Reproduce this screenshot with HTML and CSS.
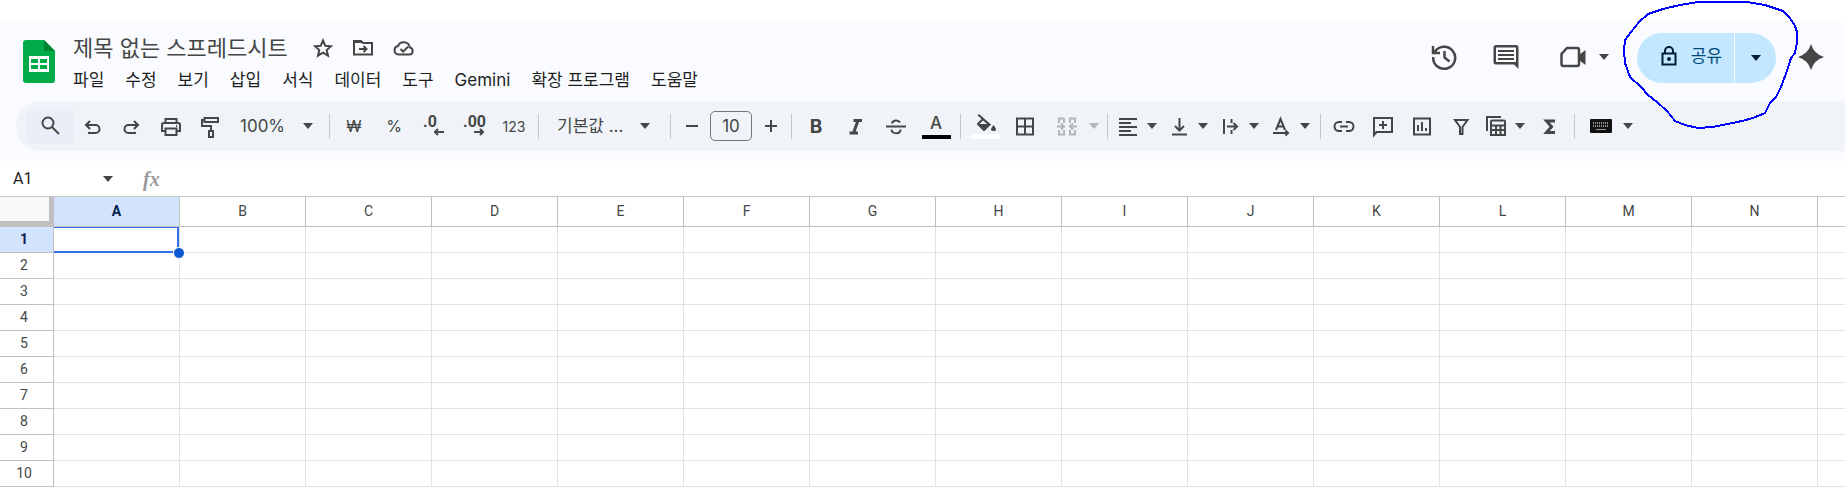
FILE: index.html
```
<!DOCTYPE html>
<html lang="ko">
	<head>
		<meta charset="utf-8">
		<title>제목 없는 스프레드시트</title>
		<link rel="stylesheet" href="styles.css">
		<script src="sheet.js" defer></script>
	</head>
	<body>

		<svg width="0" height="0" class="defs">
			<symbol id="caret" viewBox="0 0 10 6"><path d="M0 0h10L5 6z"/></symbol>
		</svg>

		<header class="top">

			<div class="header">
				<a href="#" class="logo" aria-label="스프레드시트 홈">
					<svg width="32" height="43" viewBox="0 0 32 43">
						<path fill="#00ac47" d="M3 0h18l11 11v29a3 3 0 0 1-3 3H3a3 3 0 0 1-3-3V3a3 3 0 0 1 3-3z"/>
						<path fill="#00832d" d="M21 0l11 11H21z"/>
						<path fill="#fff" fill-rule="evenodd" d="M6 16h20v16H6zM8 19v4h7v-4zM17 19v4h7v-4zM8 25v4h7v-4zM17 25v4h7v-4z"/>
					</svg>
				</a>

				<div class="heading">
					<div class="titleRow">
						<h1 class="title">제목 없는 스프레드시트</h1>
						<button class="icon" aria-label="별표">
							<svg width="20" height="20" viewBox="0 0 20 20" class="line"><path d="M10 2.500l2.300 5.300 5.700.5-4.300 3.800 1.300 5.600-5-3-5 3 1.300-5.600L2 8.300l5.700-.5z"/></svg>
						</button>
						<button class="icon" aria-label="이동">
							<svg width="20" height="20" viewBox="0 0 20 20" class="line"><path d="M1 3v13.500h18V5h-9L8 3zM1 4h8M6 11h7M10.500 8l3 3-3 3"/></svg>
						</button>
						<button class="icon" aria-label="문서 상태">
							<svg width="22" height="20" viewBox="0 0 22 20" class="line"><path d="M5.500 16.500a4.300 4.300 0 0 1-.5-8.500 6.200 6.200 0 0 1 11.800 1.500 3.600 3.600 0 0 1 .2 7zM7.500 11l2.700 2.700 4.800-4.900"/></svg>
						</button>
					</div>
					<nav class="menu">
						<a href="#">파일</a>
						<a href="#">수정</a>
						<a href="#">보기</a>
						<a href="#">삽입</a>
						<a href="#">서식</a>
						<a href="#">데이터</a>
						<a href="#">도구</a>
						<a href="#">Gemini</a>
						<a href="#">확장 프로그램</a>
						<a href="#">도움말</a>
					</nav>
				</div>

				<div class="actions">
					<button class="icon" aria-label="버전 기록">
						<svg width="26" height="26" viewBox="0 0 26 26" class="line heavy"><path d="M3.500 8.500a11 11 0 1 1-1.300 4.500M2 2v7h7M13.500 7v6.500l5 4"/></svg>
					</button>
					<button class="icon" aria-label="댓글">
						<svg width="26" height="26" viewBox="0 0 26 26"><path fill-rule="evenodd" d="M3 1h20a2.500 2.500 0 0 1 2.500 2.500V25l-4.500-4.500H3A2.500 2.500 0 0 1 .5 18V3.500A2.500 2.500 0 0 1 3 1zM3 3.500V18h20V3.500zM5 6h16v2H5zM5 10h16v2H5zM5 14h16v2H5z"/></svg>
					</button>
					<button class="icon meet" aria-label="화상 통화">
						<svg width="26" height="26" viewBox="0 0 26 26"><path class="line heavy" d="M7 4h10a2 2 0 0 1 2 2v14a2 2 0 0 1-2 2H3.500a2 2 0 0 1-2-2V10z"/><path d="M19 11l6.500-5v15L19 16z"/></svg>
						<svg width="10" height="6"><use href="#caret"/></svg>
					</button>

					<div class="share">
						<button class="shareMain">
							<svg width="16" height="20" viewBox="0 0 16 20"><path class="line" d="M1.500 7.500h13v11h-13zM4 7.500V5a4 4 0 0 1 8 0v2.500"/><circle cx="8" cy="13" r="2"/></svg>
							공유
						</button>
						<button class="shareMore" aria-label="공유 옵션">
							<svg width="10" height="6"><use href="#caret"/></svg>
						</button>
						<svg class="scribble" width="180" height="130" viewBox="0 0 180 130">
							<path d="M5 40L11 32 19 22 28 14 43 9 60 5 78 2H127L145 5 163 11 170 18 175 26 177 32V42L175 53 171 58 167 71 161 87 156 97 150 103 145 113 133 118 122 121 93 127 78 128 65 125 55 121 47 111 37 102 28 95 21 87 10 77 5 63 4 50z"/>
						</svg>
					</div>

					<button class="icon" aria-label="Gemini">
						<svg width="26" height="26" viewBox="0 0 26 26"><path d="M13 0q3 10 13 13-10 3-13 13-3-10-13-13 10-3 13-13z"/></svg>
					</button>
				</div>
			</div>

			<div class="toolbar">
				<div class="group tight">
					<button class="search" aria-label="메뉴 검색">
						<svg width="24" height="24" viewBox="0 0 24 24" class="line"><circle cx="9" cy="9" r="5.500"/><path d="M13 13l7 7"/></svg>
					</button>
					<button class="tool" aria-label="실행취소">
						<svg width="24" height="24" viewBox="0 0 24 24" class="line"><path d="M9 7l-4 4 4 4M5 11h9.500a4 4 0 0 1 0 8H7"/></svg>
					</button>
					<button class="tool" aria-label="재실행">
						<svg width="24" height="24" viewBox="0 0 24 24" class="line"><path d="M14 7l4 4-4 4M18 11H8.500a4 4 0 0 0 0 8H16"/></svg>
					</button>
					<button class="tool" aria-label="인쇄">
						<svg width="24" height="24" viewBox="0 0 24 24" class="line"><path d="M6.500 9V5h11v4M6.500 17H3v-6q0-2 2-2h14q2 0 2 2v6h-3.500M6.500 14.500h11V21h-11z"/><path d="M17 12h1"/></svg>
					</button>
					<button class="tool" aria-label="서식 복사">
						<svg width="24" height="24" viewBox="0 0 24 24" class="line"><path d="M6.500 4H20v4H6.500zM6.500 6H4v6h9v5M11 17h4v6h-4z"/></svg>
					</button>
				</div>
				<div class="pick zoom">
					<select aria-label="확대/축소"><option>100%</option><option>150%</option></select>
					<svg width="10" height="6"><use href="#caret"/></svg>
				</div>

				<div class="group">
					<button class="tool text">₩</button>
					<button class="tool text">%</button>
					<button class="tool decimal"><span>.0</span>
						<svg width="10" height="8" viewBox="0 0 10 8" class="line"><path d="M4 1L1 4l3 3M1 4h9"/></svg>
					</button>
					<button class="tool decimal"><span>.00</span>
						<svg width="10" height="8" viewBox="0 0 10 8" class="line"><path d="M6 1l3 3-3 3M9 4H0"/></svg>
					</button>
					<button class="tool text small">123</button>
				</div>

				<div class="pick font">
					<select aria-label="글꼴"><option>기본값 ...</option><option>Arial</option></select>
					<svg width="10" height="6"><use href="#caret"/></svg>
				</div>

				<div class="group size">
					<button class="step" aria-label="글꼴 크기 줄이기">
						<svg width="14" height="14" viewBox="0 0 14 14" class="line"><path d="M1 7h12"/></svg>
					</button>
					<input type="text" value="10" aria-label="글꼴 크기">
					<button class="step" aria-label="글꼴 크기 늘리기">
						<svg width="14" height="14" viewBox="0 0 14 14" class="line"><path d="M1 7h12M7 1v12"/></svg>
					</button>
				</div>

				<div class="group">
					<button class="tool text bold">B</button>
					<button class="tool" aria-label="기울임꼴">
						<svg width="24" height="24" viewBox="0 0 24 24" class="line thick"><path d="M9.500 6.500H18M5.500 19H14M14 6.500L9.500 19"/></svg>
					</button>
					<button class="tool" aria-label="취소선">
						<svg width="24" height="24" viewBox="0 0 24 24" class="line"><path d="M2 12.500h20M8 9.500a4.200 3.500 0 0 1 8-1M7.500 15.500c.5 5 9 5 9 0"/></svg>
					</button>
					<button class="tool text swatch textColor">A</button>
				</div>

				<div class="group">
					<button class="tool swatch fillColor" aria-label="채우기 색상">
						<svg width="24" height="18" viewBox="0 0 24 18"><path fill-rule="evenodd" d="M6 0l12 10.500-6 6q-1 1-2 0L4.500 11q-1-1 0-2l4-4-4-3.700zM10 6.500L6.500 10h7.500zM20.500 11q5 6 0 6t0-6z"/></svg>
					</button>
					<button class="tool" aria-label="테두리">
						<svg width="24" height="24" viewBox="0 0 24 24" class="line"><path d="M4 4.500h16v16H4zM12 4.500v16M4 12.500h16"/></svg>
					</button>
					<div class="split wide disabled">
						<button aria-label="셀 병합" disabled>
							<svg width="24" height="24" viewBox="0 0 24 24" class="line"><path d="M9 4.500H4V9M4 16v4.500h5V16M9 9V4.500M15 9V4.500h5V9M15 16v4.500h5V16M2 12.500h7M6 9.500l3 3-3 3M22 12.500h-7M18 9.500l-3 3 3 3"/></svg>
						</button>
						<button aria-label="병합 유형" disabled><svg width="10" height="6"><use href="#caret"/></svg></button>
					</div>
				</div>

				<div class="group">
					<div class="split">
						<button aria-label="가로 맞춤">
							<svg width="18" height="24" viewBox="0 0 18 24" class="line"><path d="M0 5h18M0 9h12M0 13h18M0 17h12M0 21h18"/></svg>
						</button>
						<button aria-label="가로 맞춤 선택"><svg width="10" height="6"><use href="#caret"/></svg></button>
					</div>
					<div class="split">
						<button aria-label="세로 맞춤">
							<svg width="18" height="24" viewBox="0 0 18 24" class="line"><path d="M2 20.500h15M9.500 4v12M5 12l4.500 4.500L14 12"/></svg>
						</button>
						<button aria-label="세로 맞춤 선택"><svg width="10" height="6"><use href="#caret"/></svg></button>
					</div>
					<div class="split">
						<button aria-label="텍스트 줄바꿈">
							<svg width="18" height="24" viewBox="0 0 18 24" class="line"><path d="M3 5v15M6 12.500h10M12.500 9l3.500 3.500-3.500 3.500M10.500 5v4M10.500 16v4"/></svg>
						</button>
						<button aria-label="줄바꿈 선택"><svg width="10" height="6"><use href="#caret"/></svg></button>
					</div>
					<div class="split">
						<button aria-label="텍스트 회전">
							<svg width="18" height="24" viewBox="0 0 18 24" class="line"><path d="M4 16L8.500 5 13 16M5.500 12.500h6M1 19h15M13.500 16.500L16 19l-2.500 2.500"/></svg>
						</button>
						<button aria-label="회전 선택"><svg width="10" height="6"><use href="#caret"/></svg></button>
					</div>
				</div>

				<div class="group tight">
					<button class="tool" aria-label="링크 삽입">
						<svg width="24" height="24" viewBox="0 0 24 24" class="line"><path d="M10 17H7a4.500 4.500 0 0 1 0-9h3M14 8h3a4.500 4.500 0 0 1 0 9h-3M8 12.500h8"/></svg>
					</button>
					<button class="tool" aria-label="댓글 삽입">
						<svg width="24" height="24" viewBox="0 0 24 24" class="line"><path d="M3 21V4h18v14H5.500zM12 7v8M8 11h8"/></svg>
					</button>
					<button class="tool" aria-label="차트 삽입">
						<svg width="24" height="24" viewBox="0 0 24 24" class="line"><path d="M4 4.500h16v16H4zM8 11v6M12 8v9M16 14v3"/></svg>
					</button>
					<button class="tool" aria-label="필터 만들기">
						<svg width="24" height="24" viewBox="0 0 24 24" class="line"><path d="M6 6h12.500L13.500 13v7h-2.500v-7z"/></svg>
					</button>
					<div class="split">
						<button aria-label="표 보기">
							<svg width="20" height="24" viewBox="0 0 20 24" class="line"><path d="M1 17V3h14M5 7.500q0-1 1-1h12q1 0 1 1V21H5zM5 11.500h14M5 16h14M10 12v9M14.500 12v9"/></svg>
						</button>
						<button aria-label="보기 선택"><svg width="10" height="6"><use href="#caret"/></svg></button>
					</div>
					<button class="tool" aria-label="함수">
						<svg width="24" height="24" viewBox="0 0 24 24" class="line thick"><path d="M17 7H8.500l5 5.700-5 5.800H17"/></svg>
					</button>
				</div>

				<div class="group">
					<div class="split wide">
						<button aria-label="입력 도구">
							<svg width="22" height="14" viewBox="0 0 22 14"><rect width="22" height="14" rx="1" fill="#111"/><path class="keys" d="M3 4h16M3 7h16"/><path class="space" d="M6 10.500h10"/></svg>
						</button>
						<button aria-label="입력 도구 선택"><svg width="10" height="6"><use href="#caret"/></svg></button>
					</div>
				</div>
			</div>

		</header>

		<div class="formula">
			<input class="nameBox" type="text" value="A1" aria-label="이름 상자">
			<button class="icon" aria-label="이름 범위"><svg width="10" height="6"><use href="#caret"/></svg></button>
			<label class="fx" for="fxInput">fx</label>
			<input class="fxInput" id="fxInput" type="text">
		</div>

		<main class="sheet">
			<table id="grid">
				<thead>
					<tr><th class="corner"></th></tr>
				</thead>
				<tbody></tbody>
			</table>
		</main>

	</body>
</html>
```
FILE: styles.css
```
body{
	margin: 0;
	font-family: Inter, 'Noto Sans CJK KR', sans-serif;
	font-size: 17px;
	color: #444746;
	background-color: #fff;
	overflow-x: hidden;
}

button, input, select{
	font: inherit;
	color: inherit;
	border: 0;
	margin: 0;
	padding: 0;
	background: none;
	box-sizing: border-box;
}

button{
	display: flex;
	align-items: center;
	justify-content: center;
	cursor: pointer;
}

svg{
	display: block;
	flex: none;
	fill: #444746;
}

.defs{
	position: absolute;
}

.line{
	fill: none;
	stroke: #444746;
	stroke-width: 2;
}

.heavy, .thick{
	stroke-width: 3;
}

.header .heavy{
	stroke-width: 2.5;
}

/* header */
.top{
	margin-top: 22px;
	padding-bottom: 10px;
	background-color: #f9fbff;
}

.header{
	display: flex;
	align-items: flex-start;
	height: 79px;
	padding: 0 21px 0 23px;
}

.logo{
	margin-top: 18px;
}

.heading{
	margin-left: 18px;
	padding-top: 8px;
}

.titleRow{
	display: flex;
	align-items: center;
	gap: 20px;
	height: 36px;
}

.title{
	margin: 0 5px 0 0;
	font-size: 22px;
	font-weight: 400;
	line-height: 32px;
	white-space: nowrap;
}

.menu{
	display: flex;
	gap: 21px;
	line-height: 28px;
}

.menu a{
	color: #1f1f1f;
	text-decoration: none;
	white-space: nowrap;
}

.actions{
	display: flex;
	align-items: center;
	gap: 36px;
	height: 50px;
	margin-top: 11px;
	margin-left: auto;
}

.actions .icon{
	padding-bottom: 2px;
}

.actions .meet{
	gap: 13px;
	margin-left: 5px;
}

.share{
	display: flex;
	position: relative;
	gap: 1px;
	height: 50px;
	margin: 0 -14px 0 -8px;
	color: #004a77;
}

.share button{
	background-color: #c2e7ff;
}

.share svg{
	fill: #001d35;
}

.share .line{
	fill: none;
	stroke: #001d35;
}

.shareMain{
	gap: 14px;
	width: 97px;
	padding: 0 0 4px 12px;
	border-radius: 25px 0 0 25px;
	line-height: 20px;
	white-space: nowrap;
}

.shareMore{
	width: 41px;
	border-radius: 0 25px 25px 0;
}

.share .scribble{
	position: absolute;
	top: -33px;
	left: -17px;
	fill: none;
	stroke: #0000ff;
	stroke-width: 2;
	stroke-linejoin: round;
	shape-rendering: crispEdges;
	pointer-events: none;
}

/* toolbar */
.toolbar{
	display: flex;
	align-items: center;
	height: 50px;
	margin-left: 16px;
	padding-left: 11px;
	background-color: #f0f4f9;
	border-radius: 25px 0 0 25px;
}

.group{
	display: flex;
	align-items: center;
	gap: 4px;
}

.tight{
	gap: 3px;
}

.pick + .group::before,
.group + .group::before,
.group + .font::before{
	content: "";
	width: 1px;
	height: 25px;
	background-color: #c7c7c7;
}

.pick + .group::before,
.group + .group::before{
	margin: 0 2px 0 6px;
}

.search{
	width: 47px;
	height: 35px;
	margin-right: -2px;
	background-color: #e9eef8;
	border-radius: 4px;
}

.tool{
	width: 36px;
	height: 36px;
}

.text{
	font-size: 16px;
}

.small{
	font-size: 14px;
}

.bold{
	font-size: 19px;
	font-weight: 700;
}

.decimal{
	flex-direction: column;
	align-items: flex-start;
	padding: 0 8px 0 7px;
	font-family: Roboto, sans-serif;
	font-size: 16px;
	font-weight: 700;
	line-height: 12px;
}

.decimal svg{
	align-self: flex-end;
}

.pick{
	display: flex;
	align-items: center;
	position: relative;
}

.pick select{
	width: 100%;
	height: 36px;
	appearance: none;
}

.pick svg{
	position: absolute;
	right: 14px;
	pointer-events: none;
}

.zoom{
	width: 95px;
}

.zoom select{
	padding-left: 12px;
}

.zoom svg{
	right: 10px;
}

.font{
	width: 132px;
}

.font::before{
	flex: none;
	margin-left: 6px;
}

.font select{
	padding-left: 18px;
}

.step{
	width: 29px;
	height: 30px;
}

.size input{
	width: 42px;
	height: 30px;
	border: 1px solid #747775;
	border-radius: 5px;
	text-align: center;
}

.swatch{
	flex-direction: column;
	justify-content: flex-end;
	height: 26px;
	line-height: 20px;
}

.swatch::after{
	content: "";
	width: 29px;
	height: 5px;
	margin-top: 2px;
}

.textColor{
	font-size: 17px;
	font-weight: 500;
}

.textColor::after{
	background-color: #000;
}

.fillColor::after{
	background-color: #fff;
}

.split{
	display: grid;
	grid-template-columns: 28px 19px;
	height: 36px;
}

.wide{
	grid-template-columns: 40px 14px;
}

.disabled{
	opacity: 0.35;
}

.keys{
	stroke: #999;
	stroke-width: 2;
	stroke-dasharray: 1 1;
}

.space{
	stroke: #999;
	stroke-width: 1;
}

/* formula bar */
.formula{
	display: flex;
	align-items: center;
	height: 35px;
	border-bottom: 1px solid #c7c7c7;
}

.nameBox{
	width: 103px;
	padding-left: 13px;
	font-family: Roboto, sans-serif;
	font-size: 16px;
	color: #1f1f1f;
}

.fx{
	margin-left: 30px;
	font-family: 'Liberation Serif', serif;
	font-size: 20px;
	font-style: italic;
	font-weight: 700;
	line-height: 20px;
	color: #9a9a9a;
}

.fxInput{
	flex: 1;
	margin-left: 12px;
}

/* grid */
.sheet{
	overflow: hidden;
}

table{
	width: 1944px;
	table-layout: fixed;
	border-collapse: separate;
	border-spacing: 0;
	font-family: Roboto, sans-serif;
	font-size: 14px;
	line-height: 16px;
}

th, td{
	height: 25px;
	padding: 0;
	box-sizing: content-box;
	border-right: 1px solid #e1e1e1;
	border-bottom: 1px solid #e1e1e1;
}

th{
	font-weight: 400;
	border-color: #c0c0c0;
}

thead th{
	height: 27px;
	width: 125px;
	padding-bottom: 2px;
}

tbody th{
	height: 23px;
	padding: 0 5px 2px 0;
}

thead .corner{
	width: 49px;
	height: 24px;
	padding: 0;
	background-color: #f8f9fa;
	border-right: 5px solid #c0c0c0;
	border-bottom: 6px solid #c0c0c0;
}

th.active{
	background-color: #d3e3fd;
	font-weight: 700;
	color: #041e49;
}

td.selected{
	position: relative;
}

.selected::before{
	content: "";
	position: absolute;
	top: 0;
	right: 0;
	bottom: -1px;
	left: 0;
	border: 2px solid #3271ea;
	border-top-width: 1px;
	border-left: 0;
}

.selected::after{
	content: "";
	position: absolute;
	z-index: 1;
	right: -6px;
	bottom: -7px;
	width: 10px;
	height: 10px;
	background-color: #0b57d0;
	border: 1px solid #fff;
	border-radius: 50%;
}
```
FILE: sheet.js
```
//last column runs off the window, so it carries no letter
var columns = ["A","B","C","D","E","F","G","H","I","J","K","L","M","N",""];
var rows = 10;

var headRow = document.querySelector("#grid thead tr");
var body = document.querySelector("#grid tbody");

//Column letters
for (var c = 0; c < columns.length; c++) {
	var head = document.createElement("th");
	head.scope = "col";
	head.textContent = columns[c];
	if (c == 0) {
		head.className = "active";
	}
	headRow.appendChild(head);
}

//Numbered rows
for (var r = 1; r <= rows; r++) {
	var row = body.insertRow();
	var num = document.createElement("th");
	num.scope = "row";
	num.textContent = r;
	if (r == 1) {
		num.className = "active";
	}
	row.appendChild(num);

	for (var i = 0; i < columns.length; i++) {
		var cell = row.insertCell();
		if (r == 1 && i == 0) {
			cell.className = "selected";
		}
	}
}
```
